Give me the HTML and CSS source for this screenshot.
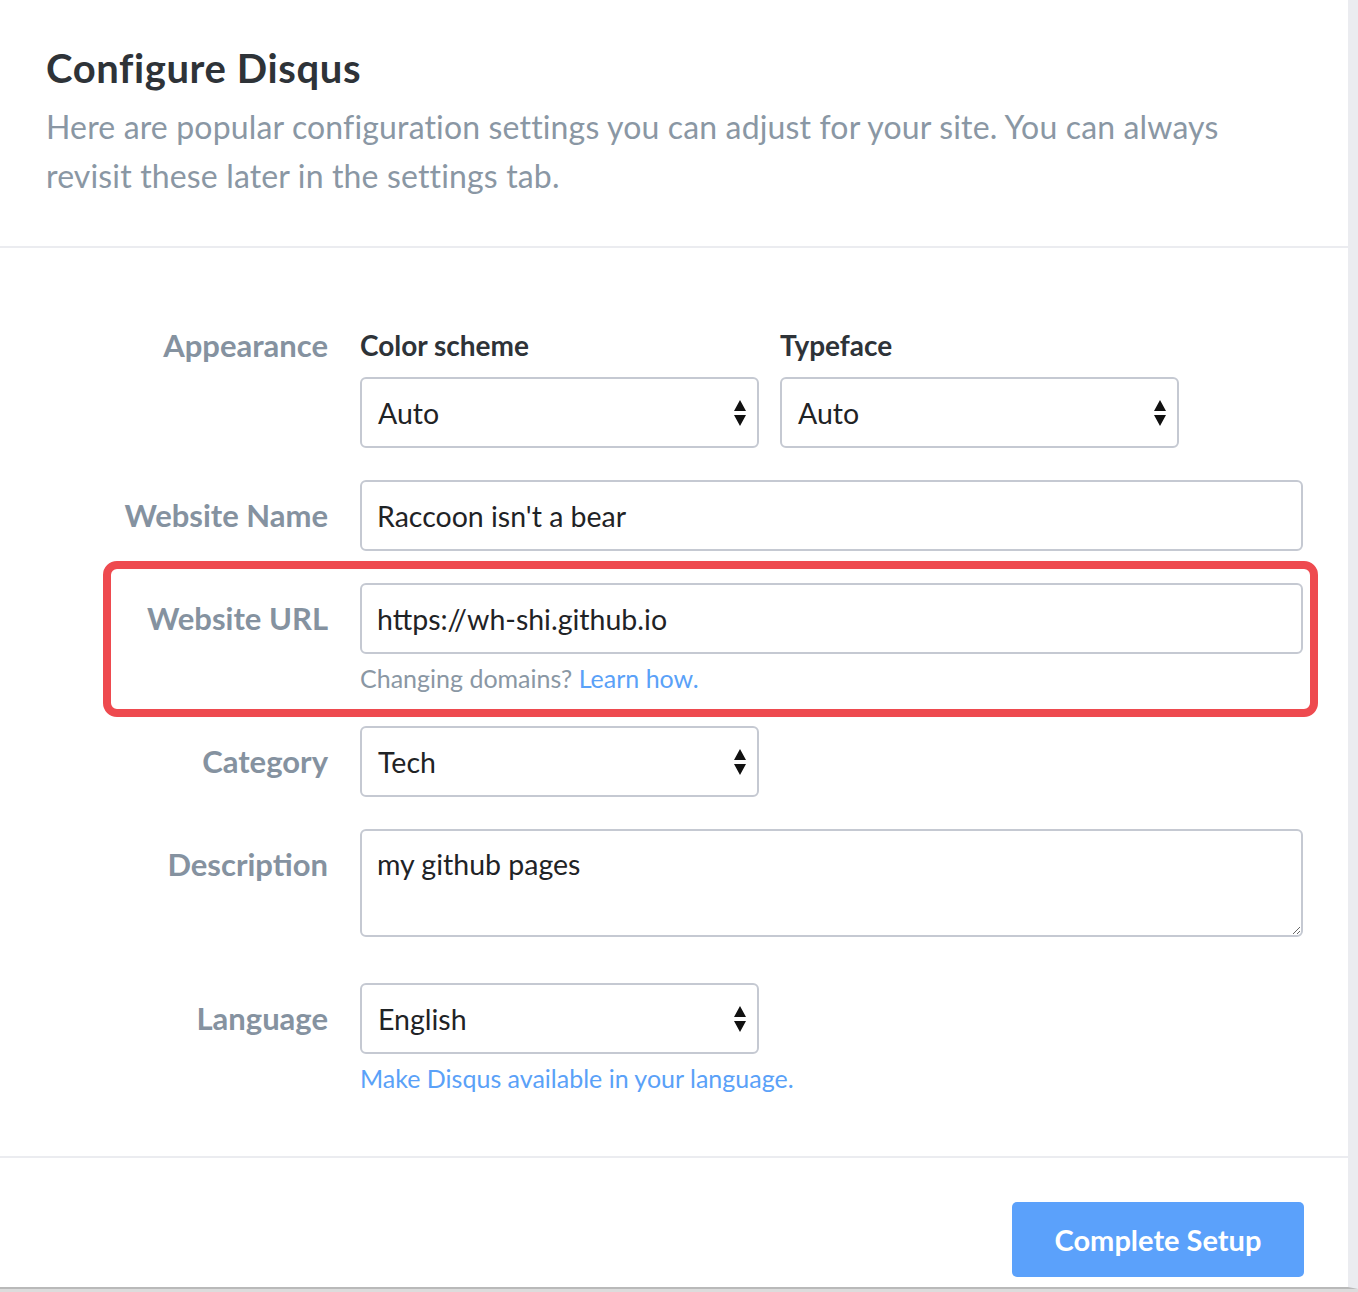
FILE: index.html
```html
<!DOCTYPE html>
<html lang="en">
<head>
<meta charset="utf-8">
<title>Configure Disqus</title>
<link rel="stylesheet" href="styles.css">
</head>
<body>
<div class="card">
  <header class="head">
    <h1 class="title">Configure Disqus</h1>
    <p class="intro">Here are popular configuration settings you can adjust for your site. You can always revisit these later in the settings tab.</p>
  </header>

  <div class="form">
    <div class="row">
      <div class="label label-top">Appearance</div>
      <div class="pair">
        <div class="sub">
          <div class="sublabel">Color scheme</div>
          <div class="select">
            <span>Auto</span>
            <svg class="arrows" width="14" height="28" viewBox="0 0 14 28"><path d="M7 1 L13 12 L1 12 Z M1 16 L13 16 L7 27 Z" fill="#111"/></svg>
          </div>
        </div>
        <div class="sub">
          <div class="sublabel">Typeface</div>
          <div class="select">
            <span>Auto</span>
            <svg class="arrows" width="14" height="28" viewBox="0 0 14 28"><path d="M7 1 L13 12 L1 12 Z M1 16 L13 16 L7 27 Z" fill="#111"/></svg>
          </div>
        </div>
      </div>
    </div>

    <div class="row">
      <div class="label">Website Name</div>
      <input class="input" type="text" value="Raccoon isn't a bear">
    </div>

    <div class="row row-mark">
      <div class="label">Website URL</div>
      <div class="field">
        <input class="input" type="text" value="https://wh-shi.github.io">
        <div class="help">Changing domains? <a class="link" href="#">Learn how.</a></div>
      </div>
    </div>

    <div class="row">
      <div class="label">Category</div>
      <div class="select select-half">
        <span>Tech</span>
        <svg class="arrows" width="14" height="28" viewBox="0 0 14 28"><path d="M7 1 L13 12 L1 12 Z M1 16 L13 16 L7 27 Z" fill="#111"/></svg>
      </div>
    </div>

    <div class="row row-desc">
      <div class="label label-desc">Description</div>
      <textarea class="textarea">my github pages</textarea>
    </div>

    <div class="row">
      <div class="label">Language</div>
      <div class="field">
        <div class="select select-half">
          <span>English</span>
          <svg class="arrows" width="14" height="28" viewBox="0 0 14 28"><path d="M7 1 L13 12 L1 12 Z M1 16 L13 16 L7 27 Z" fill="#111"/></svg>
        </div>
        <div class="help"><a class="link" href="#">Make Disqus available in your language.</a></div>
      </div>
    </div>
  </div>

  <footer class="foot">
    <button class="btn" type="button">Complete Setup</button>
  </footer>
</div>
</body>
</html>
```

FILE: styles.css
```css
* { box-sizing: border-box; }
html, body { margin: 0; padding: 0; }
body {
  background: #dcdcdc;
  font-family: Lato, "Open Sans", sans-serif;
  color: #2e3338;
  width: 1358px;
  height: 1292px;
  overflow: hidden;
}
.card {
  width: 1358px;
  background: #fff;
  border-right: 10px solid #ebecf0;
  border-bottom: 2px solid #b9b9b9;
}
.head {
  padding: 44px 46px 0 46px;
  height: 248px;
  border-bottom: 2px solid #ebecf0;
}
.title {
  margin: 0;
  font-size: 40px;
  font-weight: 700;
  letter-spacing: 0.6px;
  line-height: 48px;
  color: #2e3338;
}
.intro {
  margin: 10px 0 0 0;
  max-width: 1240px;
  font-size: 32px;
  letter-spacing: 0.15px;
  line-height: 49px;
  font-weight: 400;
  color: #8a97a4;
}
.form {
  padding: 80px 0 62px 46px;
  display: flex;
  flex-direction: column;
  gap: 32px;
  border-bottom: 2px solid #ebecf0;
}
.row {
  width: 1257px;
  display: grid;
  grid-template-columns: 282px 943px;
  column-gap: 32px;
  align-items: start;
}
.label {
  text-align: right;
  font-size: 31px;
  font-weight: 700;
  color: #8592a0;
  line-height: 70px;
}
.label-top { line-height: 34px; }
.label-desc { line-height: 70px; }
.pair {
  display: grid;
  grid-template-columns: 399px 399px;
  column-gap: 21px;
}
.sublabel {
  font-size: 28px;
  font-weight: 700;
  color: #2e3338;
  line-height: 34px;
  margin-bottom: 15px;
}
.select, .input, .textarea {
  height: 71px;
  border: 2px solid #c5c9d2;
  border-radius: 6px;
  background: #fff;
  font-family: inherit;
  font-size: 28.5px;
  color: #1f2326;
}
.select {
  display: flex;
  align-items: center;
  justify-content: space-between;
  padding: 0 10px 0 16px;
}
.select-half { width: 399px; }
.input {
  width: 943px;
  padding: 0 15px;
  outline: none;
}
.field { display: flex; flex-direction: column; }
.help {
  margin-top: 8px;
  font-size: 25px;
  line-height: 32px;
  color: #8a97a4;
}
.link { color: #5aa1f8; text-decoration: none; }
.row-mark { position: relative; }
.row-mark::after {
  content: "";
  position: absolute;
  left: 57px;
  right: -15px;
  top: -22px;
  bottom: -23px;
  border: 8px solid #ee4a4f;
  border-radius: 14px;
  pointer-events: none;
}
.textarea {
  width: 943px;
  height: 108px;
  padding: 16px 15px;
  line-height: 34px;
  resize: vertical;
  outline: none;
}
.row-desc { margin-bottom: 14px; }
.foot {
  display: flex;
  justify-content: flex-end;
  padding: 44px 44px 10px 0;
}
.btn {
  width: 292px;
  height: 75px;
  border: 0;
  border-radius: 5px;
  background: #5ba1fb;
  color: #fff;
  font-family: inherit;
  font-size: 29px;
  font-weight: 700;
}
```
